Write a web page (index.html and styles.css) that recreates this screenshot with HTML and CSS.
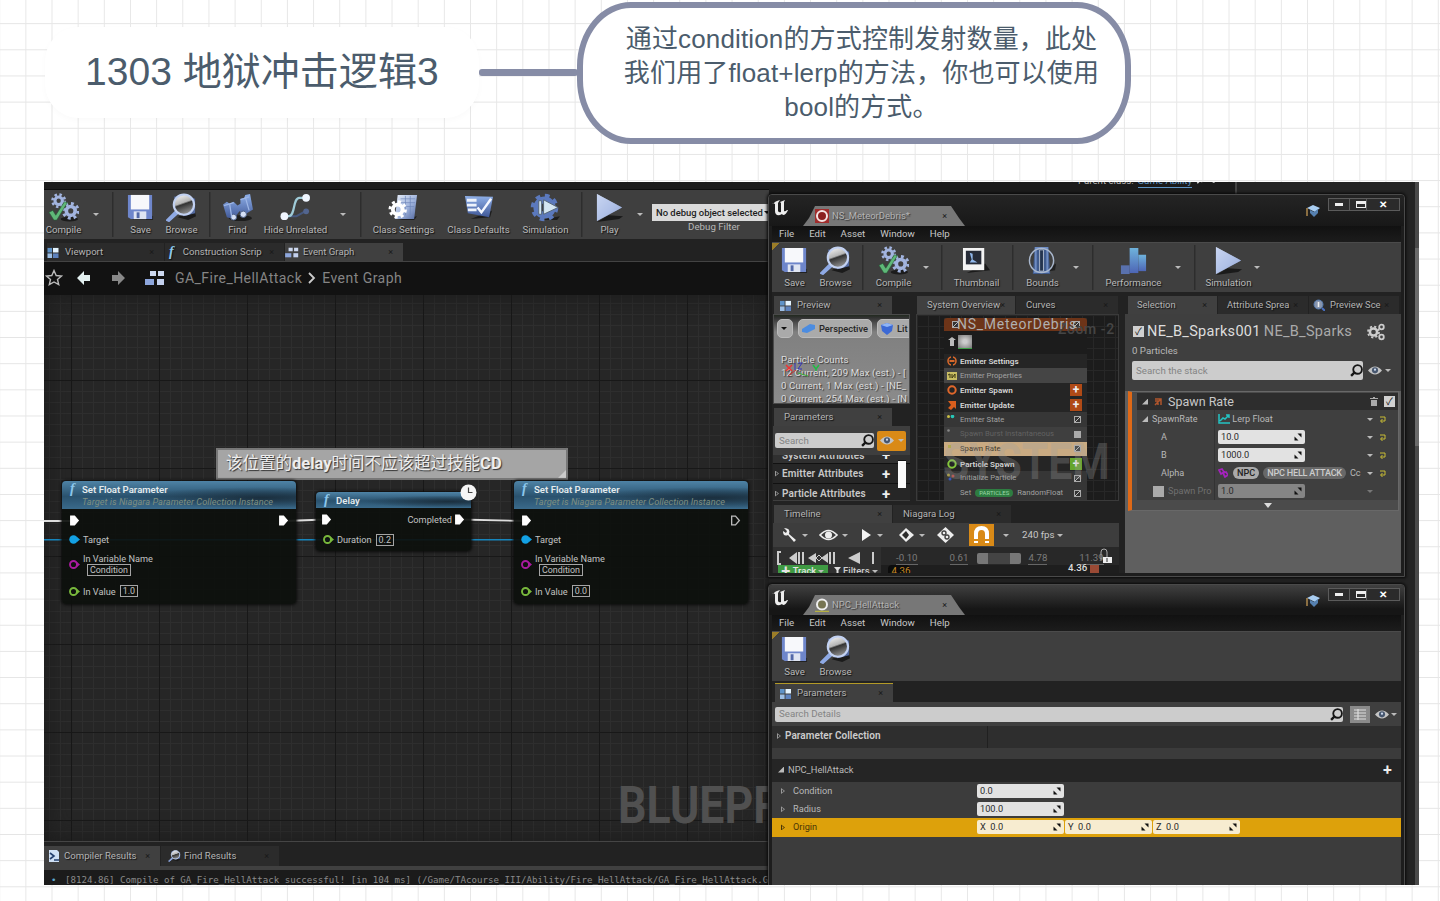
FILE: index.html
```html
<!DOCTYPE html>
<html lang="zh">
<head>
<meta charset="utf-8">
<title>1303 地狱冲击逻辑3</title>
<link rel="stylesheet" href="styles.css">
</head>
<body>
<svg class="defs" width="0" height="0">
  <defs>
    <linearGradient id="steel" x1="0" y1="0" x2="1" y2="1"><stop offset="0" stop-color="#e8effa"/><stop offset=".55" stop-color="#9fb3dc"/><stop offset="1" stop-color="#52689f"/></linearGradient>
    <linearGradient id="blue" x1="0" y1="0" x2="0" y2="1"><stop offset="0" stop-color="#8fb0e8"/><stop offset="1" stop-color="#3f5797"/></linearGradient>
    <linearGradient id="ball" x1="0" y1="0" x2=".35" y2="1"><stop offset="0" stop-color="#fff"/><stop offset=".5" stop-color="#b5b5b5"/><stop offset=".58" stop-color="#333"/><stop offset="1" stop-color="#888"/></linearGradient>
    <linearGradient id="bars" x1="0" y1="0" x2="0" y2="1"><stop offset="0" stop-color="#6fb3dc"/><stop offset="1" stop-color="#4d65b5"/></linearGradient>
  </defs>
  <symbol id="gear" viewBox="-10 -10 20 20"><g fill="none" stroke="#a2b4df"><circle r="4.8" stroke-width="4"/><circle r="8" stroke-width="3.4" stroke-dasharray="3.14 3.14"/></g></symbol>
  <symbol id="compile" viewBox="0 0 32 30"><ellipse cx="22" cy="27" rx="9" ry="2.5" fill="#1c1c1c"/><use href="#gear" x="3" y="0" width="16" height="16"/><use href="#gear" x="14" y="9" width="19" height="19"/><path d="M1 20l4-2 3 5L17 9l3 1L9 28H6z" fill="#5fb878" stroke="#255c35" stroke-width=".6"/></symbol>
  <symbol id="save" viewBox="0 0 28 30"><path d="M5 28h22V24l-2-1z" fill="#222"/><path d="M1 2h25v25H4l-3-2z" fill="#6e86cb"/><path d="M4 2h19v15H4z" fill="#f7f8fb"/><path d="M7 19h13v8H7z" fill="#dfe5f2"/><path d="M10 20h3v6h-3z" fill="#5268a8"/></symbol>
  <symbol id="browse" viewBox="0 0 32 30"><path d="M12 25l17-10 2 9-8 4z" fill="#1b1b1b"/><path d="M8 4l12-2 10 4v15l-12 3z" fill="#53699e"/><path d="M10 19l2 2L3 29l-2-1z" fill="#8faae5" stroke="#8faae5" stroke-width="2"/><circle cx="18.500" cy="12" r="10.500" fill="url(#ball)" stroke="#c2d1f1" stroke-width="2.200"/></symbol>
  <symbol id="find" viewBox="0 0 32 30"><ellipse cx="19" cy="26" rx="12" ry="3" fill="#1d1d1d"/><path d="M1 12l4-3 3 2 4-2 4 4 3-2V6l4-1 1-3 5-1 3 16-8 5-6-3-6 8-7-2z" fill="url(#blue)"/><circle cx="12" cy="25" r="3" fill="#d5e0f5" stroke="#4c5e86"/><circle cx="22" cy="22" r="3.300" fill="#d5e0f5" stroke="#4c5e86"/><path d="M2 13l10-3M19 7l9-3M24 4l4 14M8 12l2 13" stroke="#9db6e6" stroke-width="1.300"/></symbol>
  <symbol id="hide" viewBox="0 0 32 30"><path d="M6 24h11l9-5" stroke="#46587f" stroke-width="2" fill="none"/><path d="M5 24h4c7 0 4-19 11-19h6" stroke="#9fcbd8" stroke-width="2.300" fill="none"/><circle cx="4.500" cy="24" r="4" fill="#f0f6ff"/><circle cx="27" cy="5" r="4" fill="#f0f6ff"/><circle cx="27" cy="19" r="3" fill="#52658f"/></symbol>
  <symbol id="csettings" viewBox="0 0 32 30"><path d="M10 28h17l3-4z" fill="#1d1d1d"/><path d="M10 2h20l-3 25H7z" fill="url(#steel)"/><path d="M13 6h15M13 10h15M13 14h14M18 3v20M23 3v20" stroke="#6d85ba" stroke-width=".7"/><g fill="none" stroke="#fff"><circle cx="10" cy="17" r="5" stroke-width="4"/><circle cx="10" cy="17" r="8" stroke-width="3" stroke-dasharray="3.14 3.14"/></g></symbol>
  <symbol id="cdefaults" viewBox="0 0 32 30"><path d="M8 27l20-2 2-7z" fill="#1d1d1d"/><path d="M2 3l29 1-4 21-22-4z" fill="url(#blue)"/><path d="M4 6h10v3H4zM4 11h10v3H4zM5 16h9v3H5z" fill="#eef3fb"/><path d="M15 15l4 5L29 6" stroke="#f4f7ff" stroke-width="2.500" fill="none"/></symbol>
  <symbol id="simgear" viewBox="0 0 32 30"><path d="M10 28h18l3-4z" fill="#1d1d1d"/><g fill="none" stroke="#5b79bd"><circle cx="15" cy="15" r="8" stroke-width="7"/><circle cx="15" cy="15" r="12" stroke-width="4.500" stroke-dasharray="4.71 4.71"/></g><path d="M9 8h3v14H9zM14 7l15 8-15 7z" fill="#d4e6f2" stroke="#567"/></symbol>
  <symbol id="play" viewBox="0 0 30 30"><path d="M2 30l23-3 4-3-15-1z" fill="#1a1a1a"/><path d="M2 1l26 14L2 29z" fill="url(#steel)" /><path d="M2 1l26 14L2 29z" fill="#b8c8ed" opacity=".65"/></symbol>
  <symbol id="thumb" viewBox="0 0 32 30"><path d="M6 28l24-3-5-7z" fill="#1a1a1a"/><path d="M2 2h22v23H2z" fill="#f4f4f4"/><path d="M5 5h16v14H5z" fill="#272c38"/><path d="M9 7l3 1v6l5 3H9l2-3z" fill="#91b8ec"/></symbol>
  <symbol id="bounds" viewBox="0 0 30 30"><path d="M12 28l16-3 1-7z" fill="#202020"/><path d="M7 1h14l2 28H5z" fill="#405b8d"/><path d="M7 2h14M6 27h16M8 2v26M20 2v26" stroke="#6e8cc3" stroke-width="2"/><circle cx="14" cy="15" r="12.500" fill="none" stroke="#aab8ce" stroke-width="1.500"/><path d="M12 4h4v22h-4z" fill="#24344f" stroke="#adb9cb"/></symbol>
  <symbol id="perf" viewBox="0 0 30 30"><path d="M2 20h9v9H2z" fill="#5971ad"/><path d="M11 2h9v26h-9z" fill="url(#bars)"/><path d="M20 9h8v17h-8z" fill="url(#bars)"/></symbol>
  <symbol id="mag" viewBox="0 0 12 12"><circle cx="7" cy="5" r="4" fill="none" stroke="#161616" stroke-width="1.700"/><path d="M4 8L1 11" stroke="#161616" stroke-width="2.200"/></symbol>
  <symbol id="eye" viewBox="0 0 16 10"><path d="M0 5Q8-4 16 5Q8 14 0 5z" fill="#c4c4c4"/><circle cx="8" cy="4.800" r="3.500" fill="#46566e"/><circle cx="8" cy="4" r="1.300" fill="#cbd9ee"/></symbol>
  <symbol id="grid4" viewBox="0 0 12 12"><path d="M0 1h5v5H0z" fill="#5f93c8"/><path d="M6 1h6v5H6z" fill="#e4f4ff"/><path d="M0 7h5v5H0z" fill="#9dbfe5"/><path d="M6 7h6v5H6z" fill="#5d82bd"/></symbol>
  <symbol id="egraph" viewBox="0 0 20 16"><path d="M5 1h6v5H5zM13 1h6v5h-6z" fill="#cdd8ef"/><path d="M0 9h9v6H0z" fill="#8da6dc"/><path d="M12 9h7v6h-7z" fill="#c3d0ed"/></symbol>
  <symbol id="ue" viewBox="0 0 18 16"><path d="M1 4Q3 1 8 0L6 3v8q1 2 3 1V3L8 2l5-2-1 2v9q1 1 3-1l1 0q-2 5-5 5l-1-1-2 1q-5 1-5-4V4q-1-1-3 0z" fill="#eee"/></symbol>
  <symbol id="cap" viewBox="0 0 14 12"><path d="M1 3l6-3 7 3-5 4z" fill="#a9cdf1"/><path d="M4 5l4 2 4-3v4L8 12 4 8z" fill="#5580b0"/><path d="M1 3v8" stroke="#c59a55" stroke-width="1.300"/></symbol>
  <symbol id="exec" viewBox="0 0 9 10"><path d="M1 1h3.500L8 5 4.500 9H1z" fill="#fff" stroke="#fff"/></symbol>
  <symbol id="execo" viewBox="0 0 9 10"><path d="M1 1h3.500L8 5 4.500 9H1z" fill="none" stroke="#bbb" stroke-width="1.200"/></symbol>
  <symbol id="pin" viewBox="0 0 11 10"><circle cx="4.500" cy="5" r="3.500" fill="none" stroke="currentColor" stroke-width="1.900"/><path d="M8 2.500L11 5 8 7.500z" fill="currentColor"/></symbol>
  <symbol id="pinf" viewBox="0 0 11 10"><circle cx="4.500" cy="5" r="4.200" fill="currentColor"/><path d="M8 2.500L11 5 8 7.500z" fill="currentColor"/></symbol>
  <symbol id="spin" viewBox="0 0 8 8"><path d="M3.500 .5h4v4zM.5 3.500v4h4z" fill="#111"/></symbol>
  <symbol id="reset" viewBox="0 0 7 7"><path d="M1 1h5v4H2M3.500 3L1.500 5l2 2" fill="none" stroke="#c9bd35"/></symbol>
</svg>

<header class="map">
  <div class="topic">1303 地狱冲击逻辑3</div>
  <div class="link"></div>
  <div class="note">通过condition的方式控制发射数量，此处<br>我们用了float+lerp的方法，你也可以使用<br>bool的方式。</div>
</header>

<main class="shot">
  <section class="editor">
    <div class="strip"></div>
    <div class="toolbar">
      <div class="tool" style="width:38px"><svg class="ic"><use href="#compile"/></svg><span>Compile</span></div>
      <div class="car" style="width:28px"><i></i></div>
      <div class="sep" style="width:6px"></div>
      <div class="tool" style="width:48px"><svg class="ic"><use href="#save"/></svg><span>Save</span></div>
      <div class="tool" style="width:34px"><svg class="ic"><use href="#browse"/></svg><span>Browse</span></div>
      <div class="sep" style="width:24px"></div>
      <div class="tool" style="width:30px"><svg class="ic"><use href="#find"/></svg><span>Find</span></div>
      <div class="tool" style="width:86px"><svg class="ic"><use href="#hide"/></svg><span>Hide Unrelated</span></div>
      <div class="car" style="width:10px"><i></i></div>
      <div class="sep" style="width:26px"></div>
      <div class="tool" style="width:58px"><svg class="ic"><use href="#csettings"/></svg><span>Class Settings</span></div>
      <div class="tool" style="width:92px"><svg class="ic"><use href="#cdefaults"/></svg><span>Class Defaults</span></div>
      <div class="tool" style="width:42px"><svg class="ic"><use href="#simgear"/></svg><span>Simulation</span></div>
      <div class="sep" style="width:32px"></div>
      <div class="tool" style="width:22px"><svg class="ic"><use href="#play"/></svg><span>Play</span></div>
      <div class="car" style="width:40px"><i></i></div>
      <div class="filter"><b>No debug object selected<i class="dn"></i></b><span>Debug Filter</span></div>
    </div>
    <div class="tabs etabs">
      <div class="tab" style="width:117px"><svg width="12" height="11"><use href="#grid4"/></svg><span style="margin-left:6px">Viewport</span><em>×</em></div>
      <div class="tab" style="width:119px"><span class="fn" style="margin-left:4px">f</span><span style="margin-left:9px">Construction Scrip</span><em>×</em></div>
      <div class="tab on" style="width:118px"><svg width="14" height="11"><use href="#egraph"/></svg><span style="margin-left:4px">Event Graph</span><em>×</em></div>
    </div>
    <div class="crumbs">
      <svg width="20" height="18" viewBox="0 0 20 18"><path d="M10 1.500l2.200 5 5.300.5-4 3.500 1.200 5.200L10 13l-4.700 2.700L6.500 10.500 2.500 7l5.300-.5z" fill="none" stroke="#bbb" stroke-width="1.400"/></svg>
      <svg class="arr1" width="14" height="16" viewBox="0 0 14 16"><path d="M0 8l7-7v4h6v6H7v4z" fill="#e4f1f1"/></svg>
      <svg class="arr2" width="14" height="16" viewBox="0 0 14 16"><path d="M14 8L7 1v4H1v6h6v4z" fill="#888"/></svg>
      <svg class="eg" width="20" height="16"><use href="#egraph"/></svg>
      <span>GA_Fire_HellAttack</span><svg class="chev" width="8" height="12" viewBox="0 0 8 12"><path d="M1 1l5 5-5 5" fill="none" stroke="#ccc" stroke-width="1.800"/></svg><span>Event Graph</span>
    </div>
    <div class="graph">
      <div class="wm">BLUEPRINT</div>
      <svg class="wires" width="725" height="320" viewBox="44 295 725 320"><path d="M44 521h27M285 521l40-1.500M460 519.500l64 1.500" stroke="#ddd" stroke-width="1.800"/><path d="M44 539.700h480" stroke="#1685bd" stroke-width="1.600"/></svg>
      <div class="comment">该位置的<b>delay</b>时间不应该超过技能<b>CD</b></div>
      <div class="node n1">
        <div class="nh"><span class="fn">f</span><div><b>Set Float Parameter</b><small>Target is Niagara Parameter Collection Instance</small></div></div>
        <div class="pr exec"><svg><use href="#exec"/></svg><svg class="end"><use href="#exec"/></svg></div>
        <div class="pr tg"><svg class="cb"><use href="#pinf"/></svg>Target</div>
        <div class="pr vn"><svg class="cm"><use href="#pin"/></svg><div>In Variable Name<br><span class="box">Condition</span></div></div>
        <div class="pr iv"><svg class="cg"><use href="#pin"/></svg>In Value<span class="box">1.0</span></div>
      </div>
      <div class="node n2">
        <div class="nh"><span class="fn">f</span><b>Delay</b></div>
        <div class="pr exec"><svg><use href="#exec"/></svg><span class="end comp">Completed</span><svg><use href="#exec"/></svg></div>
        <div class="pr dur"><svg class="cg"><use href="#pin"/></svg>Duration<span class="box">0.2</span></div>
        <svg class="clock" width="17" height="17" viewBox="0 0 17 17"><circle cx="8.500" cy="8.500" r="8" fill="#f5f5f5"/><path d="M8.500 3.500v5h4" fill="none" stroke="#444" stroke-width="1.200"/></svg>
      </div>
      <div class="node n3">
        <div class="nh"><span class="fn">f</span><div><b>Set Float Parameter</b><small>Target is Niagara Parameter Collection Instance</small></div></div>
        <div class="pr exec"><svg><use href="#exec"/></svg><svg class="end"><use href="#execo"/></svg></div>
        <div class="pr tg"><svg class="cb"><use href="#pinf"/></svg>Target</div>
        <div class="pr vn"><svg class="cm"><use href="#pin"/></svg><div>In Variable Name<br><span class="box">Condition</span></div></div>
        <div class="pr iv"><svg class="cg"><use href="#pin"/></svg>In Value<span class="box">0.0</span></div>
      </div>
    </div>
    <div class="tabs btabs">
      <div class="tab on" style="width:116px"><svg width="12" height="12" viewBox="0 0 12 12"><path d="M1 0h8l2 2v10H1z" fill="#cfe0f5"/><path d="M2 3l4 3-4 3M6 10h5" stroke="#24406f" stroke-width="1.600" fill="none"/></svg><span style="margin-left:4px">Compiler Results</span><em>×</em></div>
      <div class="tab" style="width:118px"><svg width="13" height="12" style="margin-left:3px"><use href="#browse"/></svg><span style="margin-left:3px">Find Results</span><em>×</em></div>
    </div>
    <div class="log"><i>•</i><span>[8124.86] Compile of GA_Fire_HellAttack successful! [in 104 ms] (/Game/TAcourse_III/Ability/Fire_HellAttack/GA_Fire_HellAttack.G</span></div>
  </section>

  <div class="behind"><span>Parent class: <a>Game Ability</a> <svg width="10" height="9" viewBox="0 0 12 12"><circle cx="7" cy="5" r="3.500" fill="none" stroke="#ddd" stroke-width="2"/><path d="M4 8L1 11" stroke="#ddd" stroke-width="2"/></svg><svg width="9" height="9" viewBox="0 0 9 9"><path d="M1 1h5v5L4 8 2 7l2-2z" fill="#ddd"/></svg></span></div>
  <div class="scroll"></div>

  <section class="win w1">
    <div class="title">
      <svg class="uelogo" width="18" height="16"><use href="#ue"/></svg>
      <div class="wtab"><svg width="14" height="14" viewBox="0 0 14 14"><path d="M0 0h14v14H0z" fill="#a02c2c"/><circle cx="7" cy="7" r="5" fill="#8b2020" stroke="#f4e4e4" stroke-width="2"/></svg><span>NS_MeteorDebris*</span><em>×</em></div>
      <svg class="cap" width="14" height="12"><use href="#cap"/></svg>
      <div class="wbtn"><i class="min"></i><i class="max"></i><i class="cls">✕</i></div>
    </div>
    <div class="menu"><span>File</span><span>Edit</span><span>Asset</span><span>Window</span><span>Help</span></div>
    <div class="toolbar corner">
      <div class="tool" style="width:44px"><svg class="ic"><use href="#save"/></svg><span>Save</span></div>
      <div class="tool" style="width:38px"><svg class="ic"><use href="#browse"/></svg><span>Browse</span></div>
      <div class="sep" style="width:18px"></div>
      <div class="tool" style="width:42px"><svg class="ic"><use href="#compile"/></svg><span>Compile</span></div>
      <div class="car" style="width:24px"><i></i></div>
      <div class="sep" style="width:8px"></div>
      <div class="tool" style="width:60px"><svg class="ic"><use href="#thumb"/></svg><span>Thumbnail</span></div>
      <div class="sep" style="width:14px"></div>
      <div class="tool" style="width:44px"><svg class="ic"><use href="#bounds"/></svg><span>Bounds</span></div>
      <div class="car" style="width:24px"><i></i></div>
      <div class="sep" style="width:10px"></div>
      <div class="tool" style="width:70px"><svg class="ic"><use href="#perf"/></svg><span>Performance</span></div>
      <div class="car" style="width:20px"><i></i></div>
      <div class="sep" style="width:14px"></div>
      <div class="tool" style="width:52px"><svg class="ic"><use href="#play"/></svg><span>Simulation</span></div>
      <div class="car" style="width:6px"><i></i></div>
    </div>
    <div class="panes">
      <div class="lcol">
        <div class="upper">
          <div class="pcol">
            <div class="tabs"><div class="tab on" style="width:118px"><svg width="11" height="11" style="margin-left:6px"><use href="#grid4"/></svg><span style="margin-left:6px">Preview</span><em>×</em></div></div>
            <div class="view">
              <div class="pills"><b class="p1"><i class="dn"></i></b><b class="p2"><svg width="13" height="9" viewBox="0 0 13 9"><path d="M0 5l8-5 5 1v4L5 9 0 8z" fill="#4c8ce0"/></svg>Perspective</b><b class="p3"><svg width="12" height="12" viewBox="0 0 12 12"><path d="M0 2l6-2 6 2-1 6-5 4-5-4z" fill="#3c69d5"/><path d="M0 2l6 2 6-2-6-2z" fill="#90b5f5"/></svg>Lit</b></div>
              <div class="counts">Particle Counts<br>12 Current, 209 Max (est.) - [<br>0 Current, 1 Max (est.) - [NE_<br>0 Current, 254 Max (est.) - [N</div>
              <svg class="axis" width="40" height="18" viewBox="0 0 40 18"><path d="M4 4l6 6M10 4l-6 6" stroke="#e33" stroke-width="1.500"/><path d="M13 2v7M16 2h4l-4 6h4" stroke="#33b" fill="none"/><path d="M31 4l3 4 3-4M34 8v2" stroke="#2b4" stroke-width="1.500" fill="none"/><path d="M14 9l-8 6" stroke="#c33"/><path d="M16 12l10 3" stroke="#3a3"/></svg>
            </div>
            <div class="tabs t2"><div class="tab on" style="width:118px"><span style="margin-left:10px">Parameters</span><em>×</em></div></div>
            <div class="params">
              <div class="srow"><div class="search">Search<svg width="13" height="13"><use href="#mag"/></svg></div><div class="eyeb"><svg width="14" height="9"><use href="#eye"/></svg><i class="dn"></i></div></div>
              <div class="plist"><div class="cut"><b>System Attributes</b><u>+</u></div><div><s></s><b>Emitter Attributes</b><u>+</u></div><div><s></s><b>Particle Attributes</b><u>+</u></div><div class="thumb"></div></div>
            </div>
          </div>
          <div class="scol">
            <div class="tabs"><div class="tab on" style="width:98px"><span style="margin-left:10px">System Overview</span><em>×</em></div><div class="tab" style="width:102px"><span style="margin-left:10px">Curves</span><em>×</em></div></div>
            <div class="sys">
              <div class="em">
                <div class="eh"><i class="ck on"></i><i class="ck on r"></i></div>
                <div class="er"><svg width="10" height="10" viewBox="0 0 10 10"><path d="M5 0l4 3H7v6H3V3H1z" fill="#bbb"/></svg><i class="ethumb"></i></div>
                <div class="ei h"><svg viewBox="0 0 10 10"><circle cx="5" cy="5" r="4" fill="none" stroke="#d8682a" stroke-width="1.600"/><path d="M5 0v3M5 7v3" stroke="#252525" stroke-width="2"/><path d="M2.500 5h5" stroke="#d8682a" stroke-width="2"/></svg><b>Emitter Settings</b></div>
                <div class="ei lt"><svg viewBox="0 0 10 10"><path d="M0 1h10v8H0z" fill="#c9bd63"/><path d="M1 4l2-1v4M5 3v4l3-4v4" stroke="#393510" fill="none"/></svg><span>Emitter Properties</span></div>
                <div class="ei h"><svg viewBox="0 0 10 10"><circle cx="5" cy="5" r="3.700" fill="none" stroke="#e0672b" stroke-width="2"/></svg><b>Emitter Spawn</b><u>+</u></div>
                <div class="ei h"><svg viewBox="0 0 10 10"><path d="M1 1h8v8L7 7 4 10 1 8l3-3z" fill="#d95e1d"/></svg><b>Emitter Update</b><u>+</u></div>
                <div class="ei"><svg viewBox="0 0 10 10"><circle cx="1.500" cy="1.500" r="1.500" fill="#c9bd44"/><circle cx="5.500" cy="1.500" r="1.800" fill="#27c7b8"/></svg><span>Emitter State</span><i class="ck on r"></i></div>
                <div class="ei off"><svg viewBox="0 0 10 10"><circle cx="1.500" cy="1.500" r="1.300" fill="#888"/></svg><span>Spawn Burst Instantaneous</span><i class="ck r"></i></div>
                <div class="ei sel"><svg viewBox="0 0 10 10"><path d="M1 1h3v3H1z" fill="#b8ae35"/></svg><span>Spawn Rate</span><i class="ck on r"></i></div>
                <div class="ei h"><svg viewBox="0 0 10 10"><circle cx="5" cy="5" r="3.700" fill="none" stroke="#84c83c" stroke-width="2"/></svg><b>Particle Spawn</b><u class="g">+</u></div>
                <div class="ei"><svg viewBox="0 0 10 10"><circle cx="1.500" cy="2" r="1.500" fill="#aa9b33"/><circle cx="3" cy="6" r="1.500" fill="#3657bd"/><circle cx="6" cy="3" r="1.500" fill="#bb443d"/></svg><span>Initialize Particle</span><i class="ck on r"></i></div>
                <div class="ei"><svg viewBox="0 0 10 10"></svg><span>Set</span><span class="pp">PARTICLES</span><span>RandomFloat</span><i class="ck on r"></i></div>
              </div>
              <div class="zoom">Zoom -2</div>
              <div class="sname">NS_MeteorDebris</div>
              <div class="wm2">SYSTEM</div>
            </div>
          </div>
        </div>
        <div class="tabs tt"><div class="tab on" style="width:118px"><span style="margin-left:10px">Timeline</span><em>×</em></div><div class="tab" style="width:118px"><span style="margin-left:10px">Niagara Log</span><em>×</em></div></div>
        <div class="tl">
          <div class="tools">
            <div style="width:37px"><svg width="16" height="16" viewBox="0 0 16 16"><path d="M2 1l3 3-1 2-3-2q0 6 5 4l6 7 2-2-7-6Q9 1 2 1z" fill="#eee"/></svg><i class="dn"></i></div>
            <div style="width:40px"><svg width="19" height="12" viewBox="0 0 19 12"><path d="M1 6Q9.500-3 18 6Q9.500 15 1 6z" fill="none" stroke="#eee" stroke-width="1.700"/><circle cx="9.500" cy="6" r="3.500" fill="#eee"/></svg><i class="dn"></i></div>
            <div style="width:39px"><svg width="14" height="12" viewBox="0 0 14 12"><path d="M3 0l9 6-9 6z" fill="#f4f4f4"/></svg><i class="dn"></i></div>
            <div style="width:39px"><svg width="17" height="16" viewBox="0 0 17 16"><path d="M8 1l8 7-8 7-7-7z" fill="#eee"/><path d="M8 4l3 4-3 4-4-4z" fill="#2b2b2b"/></svg><i class="dn"></i></div>
            <div style="width:32px"><svg width="17" height="16" viewBox="0 0 17 16"><path d="M8.500 0L17 8l-8.500 8L0 8z" fill="#eee"/><circle cx="7" cy="6" r="2" fill="none" stroke="#444" stroke-width="1.400"/><circle cx="10" cy="10" r="2" fill="none" stroke="#444" stroke-width="1.400"/></svg></div>
            <div class="mag"><svg width="17" height="18" viewBox="0 0 17 18"><path d="M3 13V8q0-6 5.500-6T14 8v5" fill="none" stroke="#fff" stroke-width="4"/><path d="M1 16h4M12 16h4" stroke="#fff" stroke-width="2"/></svg></div>
            <div class="fps"><i class="dn"></i><span>240 fps</span><i class="dn"></i></div>
          </div>
          <div class="trow">
            <svg width="104" height="14" viewBox="0 0 104 14"><path d="M4 1H1v12h3M26 1v12M22 1v12M57 1v12M53 1v12M96 1v12" stroke="#ccc" stroke-width="2" fill="none"/><path d="M20 1v12L12 7zM39 2v10L31 7zM51 2v10L44 7zM83 1v12L71 7z" fill="#ccc"/><path d="M42 4l3 3-3 3-3-3z" fill="#333" stroke="#ccc"/></svg>
            <span class="num" style="margin-left:15px">-0.10</span><span class="num" style="margin-left:32px">0.61</span><i class="range"></i><span class="num" style="margin-left:7px">4.78</span><span class="num" style="margin-left:32px">11.39</span>
          </div>
          <div class="tbot"><div class="track">✚ Track <i class="dn"></i></div><span class="filt"><svg width="7" height="8" viewBox="0 0 7 8"><path d="M0 0h7L4.500 3v5h-2V3z" fill="#ddd"/></svg>Filters <i class="dn"></i></span><span class="cur">4.36</span><span class="cur2">4.36</span><i class="head"></i></div>
          <svg class="lock" width="14" height="16" viewBox="0 0 14 16"><path d="M3 12V4q0-3 3-3t3 3v6" fill="none" stroke="#aaa"/><path d="M5 9h9v6H5z" fill="#eee"/><path d="M9 10v4" stroke="#333"/></svg>
        </div>
      </div>
      <div class="rcol">
        <div class="tabs"><div class="tab on" style="width:89px"><span style="margin-left:9px">Selection</span><em>×</em></div><div class="tab" style="width:90px"><span style="margin-left:9px">Attribute Sprea</span><em>×</em></div><div class="tab" style="width:90px"><svg width="12" height="12" viewBox="0 0 12 12" style="margin-left:4px"><circle cx="5.500" cy="5.500" r="4.500" fill="#8795ae" stroke="#557bb0"/><path d="M5.500 3v5" stroke="#eee" stroke-width="1.600"/><path d="M9 9l3 3" stroke="#486fc0" stroke-width="2"/></svg><span style="margin-left:5px">Preview Sce</span><em>×</em></div></div>
        <div class="selp">
          <div class="name"><i class="cb on">✓</i><span>NE_B_Sparks001</span><span class="dim">NE_B_Sparks</span><svg width="18" height="18" viewBox="0 0 18 18"><g fill="none" stroke="#ccc"><circle cx="6.500" cy="9" r="3.600" stroke-width="2.500"/><circle cx="6.500" cy="9" r="5.500" stroke-width="1.800" stroke-dasharray="2.160"/><circle cx="14.500" cy="4" r="2.300" stroke-width="1.800"/><circle cx="14.500" cy="14" r="2.300" stroke-width="1.800"/></g></svg></div>
          <div class="np">0 Particles</div>
          <div class="srow2"><div class="search">Search the stack<svg width="13" height="13"><use href="#mag"/></svg></div><svg width="14" height="9"><use href="#eye"/></svg><i class="dn"></i></div>
          <div class="stack">
            <div class="sh"><i class="tri"></i><svg width="8" height="8" viewBox="0 0 8 8"><path d="M1 1h6v6M7 1L1 7M1 3h3v4" fill="none" stroke="#b0552c" stroke-width="1.500"/></svg><span>Spawn Rate</span><svg class="trash" width="8" height="9" viewBox="0 0 8 9"><path d="M3 0h2v1h3v1H0V1h3zM1 3h6v6H1z" fill="#aaa"/></svg><i class="cb on">✓</i></div>
            <div class="sr"><div class="k"><i class="tri"></i>SpawnRate</div><div class="v"><svg width="12" height="10" viewBox="0 0 12 10"><path d="M1 0v9h11M2 7l3-3 2 1 4-4M8 1h3v3" fill="none" stroke="#24c3c3" stroke-width="1.500"/></svg><span>&nbsp;Lerp Float</span></div><i class="dn"></i><svg width="7" height="7"><use href="#reset"/></svg></div>
            <div class="sr"><div class="k k2">A</div><div class="v"><div class="inp">10.0<svg width="8" height="8"><use href="#spin"/></svg></div></div><i class="dn"></i><svg width="7" height="7"><use href="#reset"/></svg></div>
            <div class="sr"><div class="k k2">B</div><div class="v"><div class="inp">1000.0<svg width="8" height="8"><use href="#spin"/></svg></div></div><i class="dn"></i><svg width="7" height="7"><use href="#reset"/></svg></div>
            <div class="sr"><div class="k k2">Alpha</div><div class="v"><svg width="10" height="10" viewBox="0 0 10 10"><path d="M1 2l3-1 2 3-3 2zM5 5l3-1 2 3-3 2z" fill="none" stroke="#a522bd" stroke-width="1.700"/></svg><b class="npc">NPC</b><b class="nha">NPC HELL ATTACK</b><span class="cc">Cc</span></div><i class="dn"></i><svg width="7" height="7"><use href="#reset"/></svg></div>
            <div class="sr dis"><div class="k"><i class="cb"></i>Spawn Pro</div><div class="v"><div class="inp">1.0<svg width="8" height="8"><use href="#spin"/></svg></div></div><i class="dn"></i><svg width="7" height="7"></svg></div>
            <div class="more"><i class="dn"></i></div>
          </div>
        </div>
      </div>
    </div>
  </section>

  <section class="win w2">
    <div class="title">
      <svg class="uelogo" width="18" height="16"><use href="#ue"/></svg>
      <div class="wtab"><svg width="14" height="14" viewBox="0 0 14 14"><circle cx="7" cy="6.500" r="5" fill="#777552" stroke="#eee" stroke-width="2"/><path d="M0 13.300h14" stroke="#b5b042" stroke-width="1.300"/></svg><span>NPC_HellAttack</span><em>×</em></div>
      <svg class="cap" width="14" height="12"><use href="#cap"/></svg>
      <div class="wbtn"><i class="min"></i><i class="max"></i><i class="cls">✕</i></div>
    </div>
    <div class="menu"><span>File</span><span>Edit</span><span>Asset</span><span>Window</span><span>Help</span></div>
    <div class="toolbar corner">
      <div class="tool" style="width:44px"><svg class="ic"><use href="#save"/></svg><span>Save</span></div>
      <div class="tool" style="width:38px"><svg class="ic"><use href="#browse"/></svg><span>Browse</span></div>
    </div>
    <div class="tabs t3"><div class="tab on gold" style="width:118px"><svg width="11" height="11" style="margin-left:5px"><use href="#grid4"/></svg><span style="margin-left:6px">Parameters</span><em>×</em></div></div>
    <div class="srow3"><div class="search">Search Details<svg width="13" height="13"><use href="#mag"/></svg></div><svg class="listb" width="20" height="17" viewBox="0 0 20 17"><path d="M0 0h20v17H0z" fill="#8a8a8a"/><path d="M4 4h12M4 7h12M4 10h12M4 13h12M8 3v11" stroke="#ddd" stroke-width="1.200"/></svg><svg width="14" height="9"><use href="#eye"/></svg><i class="dn"></i></div>
    <div class="pc"><s></s><b>Parameter Collection</b></div>
    <div class="gap"></div>
    <div class="nh2"><i class="tri"></i><span>NPC_HellAttack</span><u>✚</u></div>
    <div class="dr"><s></s><label>Condition</label><div class="inp">0.0<svg width="8" height="8"><use href="#spin"/></svg></div></div>
    <div class="dr"><s></s><label>Radius</label><div class="inp">100.0<svg width="8" height="8"><use href="#spin"/></svg></div></div>
    <div class="dr gold"><s></s><label>Origin</label><div class="inp">X&nbsp; 0.0<svg width="8" height="8"><use href="#spin"/></svg></div><div class="inp">Y&nbsp; 0.0<svg width="8" height="8"><use href="#spin"/></svg></div><div class="inp">Z&nbsp; 0.0<svg width="8" height="8"><use href="#spin"/></svg></div></div>
  </section>
</main>
</body>
</html>
```

FILE: styles.css
```css
* { box-sizing: border-box; }
body {
  margin: 0; width: 1440px; height: 901px; overflow: hidden;
  background-color: #fff;
  background-image: linear-gradient(90deg, #e7e7e7 1.3px, transparent 1.3px), linear-gradient(#e5e5e5 1.3px, transparent 1.3px);
  background-size: 26.16px 26.16px;
  background-position: -.8px -3px;
  font-family: Roboto, "Noto Sans CJK SC", sans-serif;
}
i, em, s, u { font-style: normal; text-decoration: none; }
svg { flex: none; display: block; }
.defs { position: absolute; }

/* mind map */
.map { height: 182px; display: flex; align-items: flex-start; padding-left: 45px; color: #4b5c6c; font-family: "Liberation Sans", "Noto Sans CJK SC", sans-serif; }
.topic { width: 434px; height: 91px; margin-top: 27px; border-radius: 34px; background: #fff; box-shadow: 0 2px 6px rgba(0,0,0,.025); font-size: 39px; line-height: 90px; padding-left: 40px; white-space: nowrap; letter-spacing: .03px; }
.link { width: 99px; height: 7px; margin-top: 69px; background: #868ca6; border-radius: 3px; }
.note { width: 554px; height: 142px; margin: 1.500px 0 0 -1px; border: 6.500px solid #868ca6; border-radius: 54px / 64px; background: #fff; font-size: 26px; line-height: 34.300px; text-align: center; padding: 14px 0 0 15px; white-space: nowrap; letter-spacing: .15px; }

.shot { position: relative; width: 1375px; height: 703px; margin-left: 44px; overflow: hidden; background: #242424; color: #b8b8b8; font-size: 9.700px; line-height: 12px; white-space: nowrap; }
.editor { width: 725px; height: 703px; overflow: hidden; }
.strip { height: 8px; background: #1b1b1b; border-bottom: 1px solid #0d0d0d; }

/* toolbars */
.toolbar { display: flex; height: 49px; background: #3f3f3f; }
.tool { flex: none; display: flex; flex-direction: column; align-items: center; padding-top: 3px; }
.tool .ic { width: 31px; height: 29px; }
.tool span { margin: 2px 0 0 1px; text-shadow: 1px 1px 1px #111; }
.car { flex: none; display: flex; align-items: center; justify-content: center; }
.car i, .dn { flex: none; width: 0; height: 0; border: 3.200px solid transparent; border-top: 3.500px solid #bbb; border-bottom: 0; }
.sep { flex: none; background: linear-gradient(#2d2d2d, #2d2d2d) center / 1.500px 45px no-repeat; }
.filter { width: 117px; margin-left: -8px; flex: none; display: flex; flex-direction: column; align-items: center; padding-top: 14px; }
.filter b { width: 117px; height: 17px; background: #dadada; color: #1e1e1e; font-weight: 500; font-size: 9.450px; line-height: 16px; padding-left: 4px; display: flex; align-items: center; gap: 1px; letter-spacing: -.02px; }
.filter .dn { border-top-color: #111; }
.filter span { margin-left: 7px; }

/* tabs */
.tabs { display: flex; background: #222; }
.tab { flex: none; display: flex; align-items: center; background: #2b2b2b; color: #b4b4b4; margin-right: 1px; padding-right: 10px; text-shadow: 1px 1px 1px #111; overflow: hidden; font-size: 9.600px; }
.tab.on { background: #404040; }
.tab em, .wtab em { margin-left: auto; color: #191919; font-size: 9px; text-shadow: none; }
.etabs { height: 23px; padding: 4px 0 0 3px; border-bottom: 1px solid #434343; }
.fn { font: italic bold 14px/14px "Liberation Serif", serif; color: #8cc7ec; }

.crumbs { height: 33px; background: #121212; display: flex; align-items: center; font-size: 14px; color: #858585; letter-spacing: .46px; padding-bottom: 1px; }
.crumbs .arr1 { margin-left: 13px; }
.crumbs .arr2 { margin-left: 20px; }
.crumbs .eg { margin: 0 10px 0 20px; }
.crumbs .chev { margin: 0 6px 0 6px; }

/* graph canvas */
.graph {
  position: relative; height: 547px; overflow: hidden; background-color: #262626;
  background-image: linear-gradient(90deg, #181818 1.300px, transparent 1.300px), linear-gradient(#181818 1.300px, transparent 1.300px), linear-gradient(90deg, #2e2e2e 1px, transparent 1px), linear-gradient(#2e2e2e 1px, transparent 1px);
  background-size: 88px 88px, 88px 88px, 11px 11px, 11px 11px;
  background-position: 27px -3px, 27px -3px, 5px -3px, 5px -3px;
  border-bottom: 1px solid #454545;
  box-shadow: inset 0 0 25px #1a1a1a;
}
.wm { position: absolute; left: 574px; top: 482px; font: bold 51px/58px Roboto; color: #505050; transform: scaleX(.875); transform-origin: 0 0; }
.wires { position: absolute; left: 0; top: 0; fill: none; }
.comment { position: absolute; left: 172px; top: 153px; width: 352px; height: 32px; border: 2px solid #777; background: #a5a5a5; color: #eee; font-size: 16.500px; line-height: 28px; padding-left: 8px; text-shadow: 1px 1px 1px #333; }
.comment::after { content: ""; position: absolute; right: 0; bottom: 0; border: 4px solid #ccc; border-left-color: transparent; border-top-color: transparent; }
.node { position: absolute; width: 234px; height: 123px; border-radius: 4px; background: rgba(13,16,13,.93); box-shadow: 0 0 3px 1px #0b0b0b; color: #c2c2c2; }
.n1 { left: 18px; top: 186px; }
.n2 { left: 272px; top: 197px; width: 155px; height: 59px; }
.n3 { left: 470px; top: 186px; }
.nh { height: 28px; display: flex; padding-left: 8px; border-radius: 4px 4px 0 0; background: radial-gradient(ellipse at 85% 60%, #1b2f3e 0, transparent 45%), linear-gradient(#4e83a6, #2a526e 55%, #3a6a8b); }
.nh > .fn { width: 12px; padding-top: 1px; }
.nh > div { display: flex; flex-direction: column; }
.nh b { color: #e4ebee; font-weight: 600; font-size: 9.600px; line-height: 17px; }
.nh small { font-style: italic; font-size: 9.200px; line-height: 8px; color: #7e8f82; letter-spacing: .04px; }
.n2 .nh { height: 15.500px; }
.pr { display: flex; align-items: center; padding-left: 7px; font-size: 9.200px; line-height: 11px; }
.pr svg { width: 11px; height: 11px; margin-right: 3px; }
.exec { height: 23px; padding-right: 4px; }
.end { margin-left: auto; }
.exec .comp { margin-right: 2px; }
.n2 .exec { padding: 0 3px 0 5px; }
.tg { height: 15px; }
.vn { height: 35px; }
.iv { height: 18px; }
.dur { height: 18px; padding-left: 7px; }
.box { display: inline-block; border: 1px solid #a5a5a5; padding: 0 2px; line-height: 10px; margin-left: 4px; font-size: 8.900px; }
.cb { color: #13a1e4; } .cm { color: #a91b9f; } .cg { color: #78b83c; }
.clock { position: absolute; right: -6px; top: -8px; }

.btabs { height: 28px; padding-top: 4px; border-bottom: 4px solid #404040; }
.btabs .tab { padding-left: 4px; }
.log { height: 16px; background: #1b1b1b; display: flex; padding-left: 7px; font: 9.150px/20px "DejaVu Sans Mono", monospace; color: #8a8a8a; overflow: hidden; }
.log i { color: #5ca6cd; width: 14px; flex: none; }

/* area behind the floating windows */
.behind { position: absolute; left: 725px; top: 0; width: 468px; height: 14px; background: #1b1b1b; border-right: 2px solid #444; overflow: hidden; padding-right: 16px; }
.behind span { display: flex; justify-content: flex-end; gap: 4px; margin-top: -7px; }
.behind a { color: #5d93c4; border-bottom: 1px solid #5d93c4; }
.scroll { position: absolute; right: 0; top: 0; width: 4px; height: 703px; background: linear-gradient(#4a4a4a 66px, #6a6a6a 66px, #6a6a6a 264px, #4a4a4a 264px); }

/* floating windows */
.win { position: absolute; left: 724px; width: 637px; border: 1px solid #4a4a4a; border-radius: 4px 4px 0 0; background: #1d1d1d; padding: 0 3px; overflow: hidden; box-shadow: 0 0 3px 1px #080808; }
.w1 { top: 12px; height: 383px; }
.w2 { top: 402px; height: 310px; }
.title { height: 31px; display: flex; background: linear-gradient(#242424, #181818); margin: 0 -3px; padding-left: 3px; }
.w2 .title { background: linear-gradient(#404040, #161616 80%); }
.uelogo { margin-top: 5px; }
.wtab { width: 162px; margin: 11px 0 0 13px; background: #777; clip-path: polygon(12px 0, 148px 0, 156px 12px, 162px 100%, 0 100%, 6px 12px); display: flex; align-items: center; color: #b4b4b4; padding: 0 18px 0 12px; }
.wtab span { margin-left: 3px; text-shadow: 1px 1px 1px #333; font-size: 9.500px; }
.cap { margin: 10px 0 0 341px; }
.wbtn { width: 72px; height: 13px; margin: 3px 0 0 8px; border: 1px solid #5b5b5b; background: linear-gradient(90deg, transparent 20px, #5b5b5b 20px, #5b5b5b 21px, transparent 21px, transparent 37px, #5b5b5b 37px, #5b5b5b 38px, transparent 38px), #2b2b2b; display: flex; justify-content: space-between; align-items: center; padding: 0 12px 0 6px; }
.min { width: 8px; height: 3px; background: #eee; }
.max { width: 10px; height: 7px; border: 1.500px solid #eee; border-top-width: 3px; }
.cls { color: #fff; font-size: 10px; font-weight: bold; }
.menu { height: 16px; background: linear-gradient(#111, #1c1c1c); display: flex; gap: 15px; padding-left: 7px; line-height: 15px; color: #c8c8c8; }
.w1 .toolbar, .w2 .toolbar { border-top: 1px solid #4b4b4b; height: 50px; }
.corner { background: linear-gradient(135deg, #9b7d28 5px, #3f3f3f 5.500px); }
.panes { display: flex; gap: 6px; height: 281px; padding: 4px 0 0 1px; background: #222; }
.lcol { width: 346px; flex: none; display: flex; flex-direction: column; }
.upper { display: flex; gap: 6px; height: 206px; }
.pcol { width: 137px; }
.scol { width: 203px; }
.panes .tabs { height: 18px; padding-left: 1px; flex: none; }
.view { position: relative; height: 90px; background: linear-gradient(#222a20 0, #333 3px, #808080 17px, #8b8b8b); overflow: hidden; border: 1px solid #4a4a4a; }
.pills { display: flex; gap: 5px; padding: 4px 0 0 3px; }
.pills b { flex: none; height: 19px; border-radius: 5px; background: #aaa; border: 1px solid #bbb; color: #262626; display: flex; align-items: center; gap: 4px; font-weight: 500; padding: 0 3px; font-size: 9.300px; }
.pills .p1 { width: 16px; padding: 0 3px; } .pills .p1 .dn { border-top-color: #111; }
.pills .p2 { width: 74px; } .pills .p3 { width: 50px; }
.counts { margin: 15px 0 0 7px; line-height: 13px; color: #ddd; text-shadow: 1px 1px 1px #333; letter-spacing: .1px; }
.axis { position: absolute; left: 8px; top: 46px; }
.panes .t2 { height: 22px; padding-top: 4px; }
.params { background: #3e3e3e; height: 75px; }
.srow { display: flex; align-items: center; gap: 3px; height: 29px; padding-left: 2px; }
.search { flex: none; width: 99px; height: 15px; background: #ccc; color: #848484; padding-left: 4px; display: flex; justify-content: space-between; align-items: center; border-radius: 2px; }
.eyeb { width: 29px; height: 20px; background: #d98a17; display: flex; align-items: center; gap: 4px; padding-left: 3px; border-radius: 2px; }
.plist { position: relative; height: 45px; overflow: hidden; background: #262626; }
.plist > div { height: 20px; display: flex; align-items: center; gap: 3px; padding-left: 2px; color: #c8c8c8; border-top: 1px solid #111; }
.plist > .cut { height: 8px; align-items: flex-end; padding: 0 0 3px 9px; border: 0; background: #303030; line-height: 9px; }
.plist b { font-weight: 600; font-size: 10px; letter-spacing: .1px; }
.plist u { position: absolute; left: 109px; font-size: 15px; font-weight: bold; color: #eee; }
.plist > .thumb { position: absolute; left: 125px; top: 5px; width: 8px; height: 28px; background: #fafafa; padding: 0; }
s { flex: none; width: 4px; height: 6px; background: #999; clip-path: polygon(0 0, 100% 50%, 0 100%, 0 0, 1px 1.500px, 1px 4.500px, 2.800px 3px, 1px 1.500px); }
.sys { position: relative; height: 187px; border: 1px solid #3a3a3a; overflow: hidden; background-color: #1c1c1c; background-image: linear-gradient(90deg, #272727 1px, transparent 1px), linear-gradient(#272727 1px, transparent 1px); background-size: 11px 11px; }
.em { position: absolute; left: 27px; top: 3px; width: 143px; background: #292929; }
.eh { height: 13px; background: #6d3418; border-radius: 3px 3px 0 0; display: flex; align-items: center; padding: 0 5px 0 8px; }
.er { height: 22.500px; background: #1c1c1c; display: flex; align-items: center; padding-left: 3px; gap: 1px; }
.ethumb { width: 14px; height: 14px; background: radial-gradient(#ccc 20%, #777); border-bottom: 1.500px solid #3b9f45; }
.ei { height: 14.700px; display: flex; align-items: center; gap: 3px; padding: 0 4px 0 3px; background: #363636; font-size: 7.700px; color: #a2a2a2; }
.ei svg { width: 10px; height: 10px; }
.ei b { color: #d6d6d6; font-weight: 600; font-size: 8.100px; }
.ei.h { background: #252525; }
.ei.lt { background: #454545; }
.ei u { width: 12px; height: 12px; background: #b04a16; color: #eee; margin: 0 1px 0 auto; text-align: center; font-weight: bold; font-size: 12px; line-height: 12px; }
.ei u.g { background: #65a52c; }
.ei.sel { background: #c9aa82; color: #3a3226; }
.ei.off { background: #3f3f3f; color: #626262; }
.ck { width: 7px; height: 7px; background: #aaa; margin-right: 2px; }
.ck.on { background: linear-gradient(135deg, transparent 45%, #bbb 45%, #bbb 58%, transparent 58%), #333; border: 1px solid #aaa; }
.ck.r { margin-left: auto; }
.pp { background: #2e7d41; color: #9bd6a8; border-radius: 4px; font-size: 6px; line-height: 8px; padding: 0 4px; margin: 0 1px; }
.zoom { position: absolute; left: 141px; top: 6px; font-size: 14px; line-height: 16px; color: #454545; letter-spacing: .6px; font-weight: 500; }
.sname { position: absolute; left: 40px; top: 1px; font-size: 14px; line-height: 16px; color: #b0b0b0; letter-spacing: .75px; }
.wm2 { position: absolute; left: 26px; top: 118px; font: bold 50px/58px Roboto; color: rgba(160,160,160,.3); transform: scaleX(.855); transform-origin: 0 0; }
.panes .tt { height: 22px; padding-top: 4px; }
.tl { position: relative; height: 51px; background: #3d3d3d; overflow: hidden; }
.tools { height: 24px; display: flex; align-items: center; padding-left: 9px; }
.tools > div { flex: none; display: flex; align-items: center; gap: 4px; }
.tools > .mag { width: 25px; height: 22px; background: #d98a17; justify-content: center; }
.tools > .fps { gap: 13px; padding-left: 9px; color: #c8c8c8; }
.fps span { margin-right: -11px; }
.trow { height: 18px; display: flex; align-items: center; padding: 4px 0 0 4px; background: linear-gradient(90deg, #303030 108px, #282828 108px); }
.num { color: #7b7b7b; border-bottom: 1px solid #666; line-height: 12px; }
.range { width: 44px; height: 11px; margin-left: 9px; background: linear-gradient(90deg, #777 11px, #444 11px, #444 33px, #777 33px); border-radius: 2px; }
.tbot { height: 12px; display: flex; align-items: center; padding-left: 5px; background: linear-gradient(90deg, #303030 108px, #1e1e1e 108px); color: #ccc; font-weight: 500; }
.track { width: 50px; background: #3f9a43; display: flex; align-items: center; gap: 2px; font-size: 9.500px; padding-left: 3px; color: #e5e5e5; }
.filt { margin-left: 6px; display: flex; align-items: center; gap: 2px; font-size: 9.500px; }
.cur { margin-left: 10px; color: #c78a22; background: #0c0c0c; border-radius: 4px; padding-left: 4px; font-weight: 400; }
.cur2 { width: 20px; margin-left: auto; color: #ddd; align-self: flex-start; line-height: 6px; }
.head { width: 9px; height: 12px; background: #9a4a35; margin: 0 20px 0 2px; }
.lock { position: absolute; left: 325px; top: 25px; }
.rcol { width: 276px; }
.rcol .tabs { padding-left: 3px; }
.rcol .tab { font-size: 9.400px; }
.selp { background: #5f5f5f; height: 259px; }
.name { height: 31px; background: #3f3f3f; display: flex; align-items: center; padding: 4px 0 0 8px; font-size: 14.500px; color: #ddd; letter-spacing: .3px; gap: 3px; }
.name .dim { color: #aaa; }
.name > svg { margin-left: 12px; }
i.cb { flex: none; width: 11px; height: 11px; background: #d0d0d0; color: #111; font-size: 10px; line-height: 11px; text-align: center; letter-spacing: 0; }
.np { height: 15px; background: #3f3f3f; padding-left: 7px; line-height: 11px; }
.srow2 { height: 31px; background: #3f3f3f; display: flex; align-items: flex-start; padding: 1px 0 0 7px; gap: 5px; }
.srow2 .search { width: 231px; height: 19px; }
.srow2 > svg { margin-top: 5px; }
.srow2 > .dn { margin: 8px 0 0 -2px; }
.stack { margin: 0 0 0 3px; border: 1px solid #686868; border-left: 4px solid #df6917; padding: 1px 0 0 5px; width: 271px; background: #4b4b4b; }
.sh { height: 17px; background: #2d2d2d; display: flex; align-items: center; padding: 0 3px 0 5px; font-size: 12.500px; color: #c8c8c8; gap: 6px; }
.sh .trash { margin-left: auto; }
.tri { flex: none; width: 6px; height: 6px; background: #bbb; clip-path: polygon(100% 0, 100% 100%, 0 100%); }
.sr { height: 18.100px; background: #3f3f3f; display: flex; align-items: center; font-size: 9.100px; gap: 6px; }
.k { width: 78px; height: 18px; flex: none; border-right: 1px solid #333; display: flex; align-items: center; gap: 4px; padding-left: 5px; }
.k2 { padding-left: 24px; }
.v { width: 143px; margin-left: -3px; flex: none; display: flex; align-items: center; overflow: hidden; }
.inp { flex: none; width: 87px; height: 14px; background: #e2e2e2; border-radius: 2px; color: #2a2a2a; font-size: 9.200px; line-height: 14px; display: flex; justify-content: space-between; align-items: center; padding: 0 3px; }
.npc { background: #aaa; color: #222; border-radius: 6px; padding: 0 4px; margin-left: 5px; font-weight: 500; }
.nha { background: #686868; color: #ccc; border-radius: 6px; padding: 0 4px; margin-left: 4px; font-weight: 500; letter-spacing: -.22px; }
.cc { margin-left: 4px; }
.dis { color: #707070; } .dis .inp { background: #858585; } .dis .dn { border-top-color: #777; }
.dis .k { padding-left: 16px; overflow: hidden; } .dis .k i { background: #aaa; }
.more { height: 10px; display: flex; justify-content: center; align-items: center; }
.more .dn { border-width: 5px 4px 0; border-top-color: #ddd; }

/* parameter window */
.w2 .title { height: 30px; }
.w2 .wtab { margin-top: 10px; }
.t3 { height: 21px; padding: 2px 0 0 3px; }
.tab.gold { border-top: 1px solid #b39a27; }
.srow3 { height: 24px; background: #3f3f3f; display: flex; align-items: center; gap: 5px; padding-left: 3px; }
.srow3 .search { width: 568px; }
.srow3 .listb { margin-left: 2px; }
.srow3 .dn { margin-left: -3px; }
.pc { height: 22px; background: linear-gradient(90deg, transparent 215px, #202020 215px, #202020 216px, transparent 216px), #2e2e2e; display: flex; align-items: center; padding: 3px 0 5px 5px; gap: 4px; color: #ccc; }
.pc b { font-weight: 600; font-size: 10px; letter-spacing: .05px; }
.gap { height: 11px; background: #3b3b3b; }
.nh2 { height: 23px; background: #252525; display: flex; align-items: center; padding: 0 9px 2px 6px; gap: 4px; color: #bbb; font-size: 9.300px; }
.nh2 u { margin-left: auto; color: #eee; }
.dr { height: 18.200px; background: #3c3c3c; display: flex; align-items: center; padding-left: 9px; font-size: 9.200px; }
.dr label { width: 184px; margin-left: 8px; flex: none; }
.dr .inp + .inp { margin-left: 1px; }
.dr.gold { background: #dda10b; color: #4a3608; }
.dr.gold s { background: #4a3608; }
.dr.gold .inp { background: #f7ecd0; }
.w2::after { content: ""; display: block; height: 70px; background: #3c3c3c; }
```
